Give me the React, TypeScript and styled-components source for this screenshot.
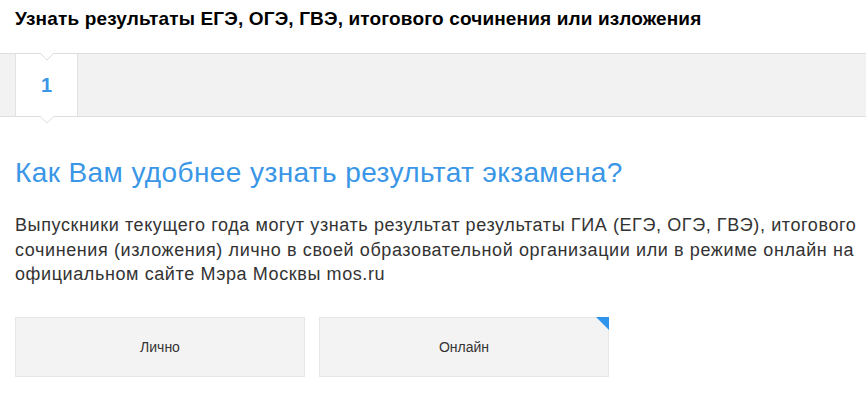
import React from 'react';
import styled, { createGlobalStyle } from 'styled-components';

const GlobalStyle = createGlobalStyle`
    body {
        margin: 0;
        background: #fff;
        font-family: Arial, "Liberation Sans", sans-serif;
        color: #333;
    }
`

const Page = styled.div`
    width: 866px;
    height: 410px;
    overflow: hidden;
`

const Title = styled.h1`
    box-sizing: border-box;
    margin: 0;
    padding: 8px 15px 0;
    height: 53px;
    font-size: 19px;
    font-weight: bold;
    letter-spacing: 0.15px;
    color: #000;
    line-height: 22px;
`

const StepBar = styled.div`
    display: flex;
    height: 62px;
    background-color: #f2f2f2;
    border-top: 1px solid #dedede;
    border-bottom: 1px solid #dedede;
    padding-left: 15px;
`

const StepTab = styled.div`
    position: relative;
    width: 61px;
    height: 62px;
    background-color: #fff;
    border-left: 1px solid #e2e2e2;
    border-right: 1px solid #e2e2e2;
    display: flex;
    align-items: center;
    justify-content: center;
    color: #3a96e6;
    font-size: 20px;
    font-weight: bold;
`

const NotchTop = styled.svg`
    position: absolute;
    top: -1px;
    left: 24px;
`

const NotchBottom = styled.svg`
    position: absolute;
    bottom: -8px;
    left: 24px;
`

const Content = styled.div`
    padding: 0 7px 0 15px;
`

const Question = styled.h2`
    margin: 40px 0 0;
    font-size: 28px;
    font-weight: normal;
    letter-spacing: 0.4px;
    color: #3a96e6;
    line-height: 32px;
`

const Description = styled.p`
    margin: 24px 0 0;
    font-size: 18px;
    letter-spacing: 0.6px;
    line-height: 24.5px;
    color: #333;
`

const Options = styled.div`
    display: flex;
    gap: 14px;
    margin-top: 30px;
`

const Option = styled.div`
    position: relative;
    width: 288px;
    height: 58px;
    background-color: #f3f3f3;
    border: 1px solid #e6e6e6;
    display: flex;
    align-items: center;
    justify-content: center;
    font-size: 14px;
    color: #333;
    cursor: pointer;
`

const Corner = styled.div`
    position: absolute;
    top: -1px;
    right: -1px;
    width: 0;
    height: 0;
    border-top: 13px solid #2f95ec;
    border-left: 13px solid transparent;
`

const App: React.FC = () => {
    return (
        <Page>
            <GlobalStyle />
            <Title>Узнать результаты ЕГЭ, ОГЭ, ГВЭ, итогового сочинения или изложения</Title>
            <StepBar>
                <StepTab>
                    <NotchTop width="14" height="8" viewBox="0 0 14 8">
                        <polygon points="0,0 14,0 7,7" fill="#fff" />
                        <polyline points="0,0 7,7 14,0" fill="none" stroke="#dedede" strokeWidth="1" />
                    </NotchTop>
                    1
                    <NotchBottom width="14" height="8" viewBox="0 0 14 8">
                        <polygon points="0,0 14,0 7,7" fill="#fff" />
                        <polyline points="0,0.5 7,7 14,0.5" fill="none" stroke="#dedede" strokeWidth="1" />
                    </NotchBottom>
                </StepTab>
            </StepBar>
            <Content>
                <Question>Как Вам удобнее узнать результат экзамена?</Question>
                <Description>
                    Выпускники текущего года могут узнать результат результаты ГИА (ЕГЭ, ОГЭ, ГВЭ), итогового
                    сочинения (изложения) лично в своей образовательной организации или в режиме онлайн на
                    официальном сайте Мэра Москвы mos.ru
                </Description>
                <Options>
                    <Option>Лично</Option>
                    <Option>
                        Онлайн
                        <Corner />
                    </Option>
                </Options>
            </Content>
        </Page>
    )
}

export default App;
